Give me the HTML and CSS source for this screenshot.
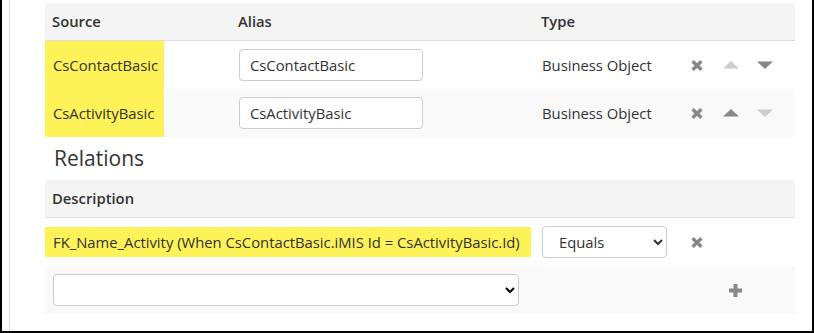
FILE: index.html
```html
<!DOCTYPE html>
<html lang="en">
<head>
  <meta charset="UTF-8">
  <meta name="viewport" content="width=device-width, initial-scale=1.0">
  <title>Query Sources</title>
  <link rel="stylesheet" href="styles.css">
</head>
<body>
  <div class="frame">
    <div class="panel">

      <!-- Sources -->
      <div class="grid sources head">
        <div class="cell">Source</div>
        <div class="cell">Alias</div>
        <div class="cell">Type</div>
        <div class="cell"></div>
      </div>

      <div class="grid sources row">
        <div class="cell src"><span class="mark">CsContactBasic</span></div>
        <div class="cell alias"><input type="text" value="CsContactBasic"></div>
        <div class="cell type">Business Object</div>
        <div class="cell actions">
          <span class="slot"><svg class="ico-x" width="12" height="11" viewBox="0 0 12 11"><path d="M1.6 1.2 L10.4 9.8 M10.4 1.2 L1.6 9.8"/></svg></span>
          <span class="slot"><svg class="caret off" width="16" height="8" viewBox="0 0 16 8"><polygon points="0,7.5 8,0 16,7.5"/></svg></span>
          <span class="slot"><svg class="caret" width="16" height="8" viewBox="0 0 16 8"><polygon points="0,0.5 16,0.5 8,8"/></svg></span>
        </div>
      </div>

      <div class="grid sources row alt">
        <div class="cell src"><span class="mark">CsActivityBasic</span></div>
        <div class="cell alias"><input type="text" value="CsActivityBasic"></div>
        <div class="cell type">Business Object</div>
        <div class="cell actions">
          <span class="slot"><svg class="ico-x" width="12" height="11" viewBox="0 0 12 11"><path d="M1.6 1.2 L10.4 9.8 M10.4 1.2 L1.6 9.8"/></svg></span>
          <span class="slot"><svg class="caret" width="16" height="8" viewBox="0 0 16 8"><polygon points="0,7.5 8,0 16,7.5"/></svg></span>
          <span class="slot"><svg class="caret off" width="16" height="8" viewBox="0 0 16 8"><polygon points="0,0.5 16,0.5 8,8"/></svg></span>
        </div>
      </div>

      <!-- Relations -->
      <h3 class="section">Relations</h3>

      <div class="head rel-head">
        <div class="cell">Description</div>
      </div>

      <div class="grid relations row">
        <div class="cell rel">
          <span class="mark-line">FK_Name_Activity (When CsContactBasic.iMIS Id = CsActivityBasic.Id)</span>
          <select class="op">
            <option>Equals</option>
            <option>Not Equals</option>
          </select>
        </div>
        <div class="cell actions">
          <span class="slot"><svg class="ico-x" width="12" height="11" viewBox="0 0 12 11"><path d="M1.6 1.2 L10.4 9.8 M10.4 1.2 L1.6 9.8"/></svg></span>
        </div>
      </div>

      <div class="grid add-row row alt">
        <div class="cell pick">
          <select class="new-rel"><option></option></select>
        </div>
        <div class="cell actions">
          <span class="slot"><svg class="ico-plus" width="15" height="15" viewBox="0 0 15 15"><path d="M5.5 1 h4 v4.5 h4.5 v4 h-4.5 v4.5 h-4 v-4.5 h-4.5 v-4 h4.5 z"/></svg></span>
        </div>
      </div>

    </div>
  </div>
</body>
</html>
```

FILE: styles.css
```css
* {
  box-sizing: border-box;
}

body {
  margin: 0;
  font-family: "Open Sans", Arial, sans-serif;
  font-size: 14.8px;
  color: #333;
  background: #fff;
}

.frame {
  width: 814px;
  height: 333px;
  border-left: 2px solid #000;
  border-right: 2px solid #000;
  border-bottom: 2px solid #000;
  padding-left: 7px;
}

.panel {
  height: 100%;
  border-left: 1px solid #ddd;
  padding: 3px 17px 0 35px;
}

.grid {
  display: grid;
}

.sources {
  grid-template-columns: 186px 303px 146px 1fr;
}

.relations {
  grid-template-columns: 635px 34px;
  height: 49px;
}

.add-row {
  grid-template-columns: 673px 34px;
}

.head {
  height: 38px;
  background: #f4f4f4;
  border-bottom: 1px solid #ddd;
  font-weight: 600;
}

.head .cell {
  padding-left: 7px;
  line-height: 37px;
}

.row {
  height: 48px;
  align-items: center;
}

.row.alt {
  background: #f9f9f9;
}

.cell {
  display: flex;
  align-items: center;
  height: 100%;
}

.src {
  padding: 0;
}

.mark {
  display: block;
  width: 119px;
  height: 100%;
  line-height: 48px;
  padding-left: 8px;
  background: #fdf257;
}

.alias {
  padding-left: 8px;
}

.alias input {
  width: 184px;
  height: 32px;
  padding: 0 10px;
  border: 1px solid #ccc;
  border-radius: 4px;
  font: inherit;
  color: #333;
  background: #fff;
}

.type {
  padding-left: 8px;
}

.actions .slot {
  display: flex;
  align-items: center;
  justify-content: center;
  width: 34px;
}

.ico-x path {
  stroke: #888;
  stroke-width: 3.4;
  fill: none;
}

.caret {
  fill: #888;
}

.caret.off {
  fill: #ccc;
}

.ico-plus {
  fill: #888;
}

.section {
  margin: 0;
  height: 43px;
  padding: 6px 0 0 9px;
  font-size: 21px;
  font-weight: 400;
  line-height: 30px;
  color: #333;
}

.rel-head .cell {
  height: 37px;
}

.rel {
  padding: 0;
}

.mark-line {
  display: inline-block;
  width: 486px;
  height: 30px;
  line-height: 30px;
  padding: 0 8px;
  background: #fdf257;
  white-space: nowrap;
}

.op {
  margin-left: 11px;
  width: 125px;
  height: 32px;
  padding: 0 6px 0 12px;
  border: 1px solid #ccc;
  border-radius: 4px;
  font: inherit;
  color: #333;
  background: #fff;
}

.pick {
  padding-left: 8px;
}

.new-rel {
  width: 466px;
  height: 32px;
  border: 1px solid #ccc;
  border-radius: 4px;
  font: inherit;
  background: #fff;
}
```
